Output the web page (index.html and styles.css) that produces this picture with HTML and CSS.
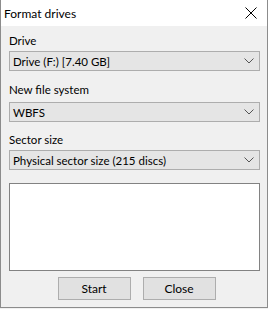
FILE: index.html
```html
<!DOCTYPE html>
<html lang="en">
<head>
<meta charset="UTF-8" />
<title>Format drives</title>
<link rel="stylesheet" href="styles.css">
</head>
<body>

<div class="window">
  <div class="titlebar">
    <span class="title">Format drives</span>
    <svg class="close-icon" width="12" height="12" viewBox="0 0 12 12">
      <path d="M0.5 0.5 L11.5 11.5 M11.5 0.5 L0.5 11.5" stroke="#000" stroke-width="1" fill="none" />
    </svg>
  </div>

  <div class="content">
    <div class="field field-drive">
      <div class="field-label">Drive</div>
      <div class="combo">
        <span>Drive (F:) [7.40 GB]</span>
        <svg class="chevron" width="10" height="6" viewBox="0 0 10 6"><path d="M0.5 0.5 L5 5 L9.5 0.5" stroke="#555" fill="none" /></svg>
      </div>
    </div>

    <div class="field field-fs">
      <div class="field-label">New file system</div>
      <div class="combo">
        <span>WBFS</span>
        <svg class="chevron" width="10" height="6" viewBox="0 0 10 6"><path d="M0.5 0.5 L5 5 L9.5 0.5" stroke="#555" fill="none" /></svg>
      </div>
    </div>

    <div class="field field-sector">
      <div class="field-label">Sector size</div>
      <div class="combo">
        <span>Physical sector size (215 discs)</span>
        <svg class="chevron" width="10" height="6" viewBox="0 0 10 6"><path d="M0.5 0.5 L5 5 L9.5 0.5" stroke="#555" fill="none" /></svg>
      </div>
    </div>

    <div class="log"></div>

    <div class="buttons">
      <button class="btn">Start</button>
      <button class="btn">Close</button>
    </div>
  </div>
</div>

</body>
</html>
```

FILE: styles.css
```css
body {
  margin: 0;
  background: #f0f0f0;
  font-family: Lato, 'Liberation Sans', sans-serif;
  font-size: 11.5px;
  color: #000;
}
.window {
  width: 268px;
  height: 308px;
  box-sizing: border-box;
  border: 1px solid #8c8c8c;
  border-top: none;
  background: #f0f0f0;
  display: flex;
  flex-direction: column;
}
.titlebar {
  height: 26px;
  background: #fff;
  display: flex;
  align-items: center;
  justify-content: space-between;
  padding: 0 10px 0 3px;
}
.title {
  font-size: 12px;
  line-height: 15px;
}
.close-icon {
  display: block;
}
.content {
  padding: 7px 7px 0 8px;
  display: flex;
  flex-direction: column;
}
.field-label {
  line-height: 15px;
  height: 15px;
}
.field-drive .field-label {
  margin-bottom: 3px;
}
.field-fs {
  margin-top: 11px;
}
.field-fs .field-label {
  margin-bottom: 5px;
}
.field-sector {
  margin-top: 10px;
}
.field-sector .field-label {
  margin-bottom: 3px;
}
.combo {
  height: 20px;
  box-sizing: border-box;
  border: 1px solid #adadad;
  background: #e5e5e5;
  display: flex;
  align-items: center;
  justify-content: space-between;
  padding: 0 5px 0 3px;
  line-height: 15px;
}
.chevron {
  display: block;
}
.log {
  margin-top: 13px;
  height: 88px;
  box-sizing: border-box;
  border: 1px solid #828282;
  background: #fff;
}
.buttons {
  margin-top: 6px;
  display: flex;
  justify-content: center;
  gap: 12px;
  padding-left: 4px;
}
.btn {
  width: 73px;
  height: 23px;
  box-sizing: border-box;
  border: 1px solid #adadad;
  background: #e1e1e1;
  font-family: inherit;
  font-size: 12px;
  color: #000;
  padding: 0;
}
```
